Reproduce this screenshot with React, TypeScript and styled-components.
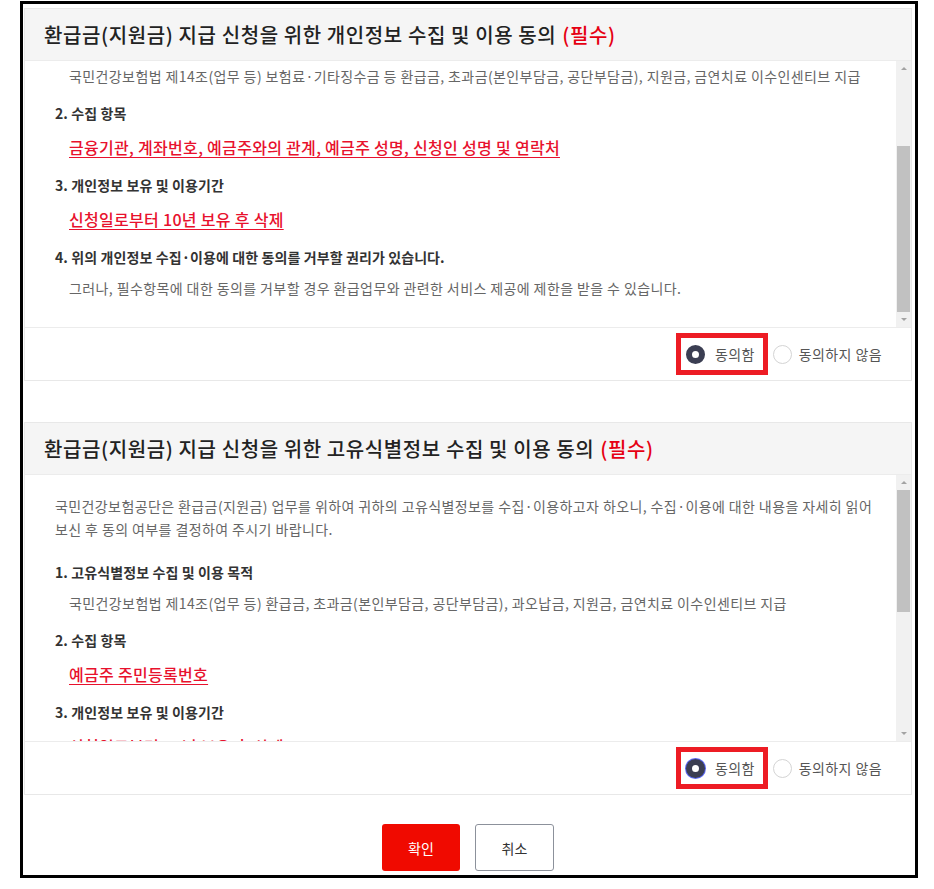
import React, { useLayoutEffect, useRef, useState } from 'react';
import styled, { createGlobalStyle, css } from 'styled-components';

interface TermItem {
  title: string;
  desc?: string;
  highlight?: string;
}

interface AgreePanelProps {
  title: string;
  intro: string;
  items: TermItem[];
  name: string;
  scrollToEnd?: boolean;
  focused?: boolean;
}

const privacyItems: TermItem[] = [
  {
    title: '1. 개인정보 수집 및 이용 목적',
    desc: '국민건강보험법 제14조(업무 등) 보험료·기타징수금 등 환급금, 초과금(본인부담금, 공단부담금), 지원금, 금연치료 이수인센티브 지급',
  },
  { title: '2. 수집 항목', highlight: '금융기관, 계좌번호, 예금주와의 관계, 예금주 성명, 신청인 성명 및 연락처' },
  { title: '3. 개인정보 보유 및 이용기간', highlight: '신청일로부터 10년 보유 후 삭제' },
  {
    title: '4. 위의 개인정보 수집·이용에 대한 동의를 거부할 권리가 있습니다.',
    desc: '그러나, 필수항목에 대한 동의를 거부할 경우 환급업무와 관련한 서비스 제공에 제한을 받을 수 있습니다.',
  },
];

const uniqueItems: TermItem[] = [
  {
    title: '1. 고유식별정보 수집 및 이용 목적',
    desc: '국민건강보험법 제14조(업무 등) 환급금, 초과금(본인부담금, 공단부담금), 과오납금, 지원금, 금연치료 이수인센티브 지급',
  },
  { title: '2. 수집 항목', highlight: '예금주 주민등록번호' },
  { title: '3. 개인정보 보유 및 이용기간', highlight: '신청일로부터 10년 보유 후 삭제' },
  {
    title: '4. 위의 고유식별정보 수집·이용에 대한 동의를 거부할 권리가 있습니다.',
    desc: '그러나, 필수항목에 대한 동의를 거부할 경우 환급업무와 관련한 서비스 제공에 제한을 받을 수 있습니다.',
  },
  {
    title: '5. 고유식별정보 처리 근거',
    desc: '국민건강보험법 시행령 제81조의4(민감정보 및 고유식별정보의 처리)',
  },
  {
    title: '6. 고유식별정보의 제3자 제공',
    desc: '수집된 고유식별정보는 법령에 근거한 경우를 제외하고 제3자에게 제공하지 않습니다.',
  },
];

function AgreePanel({ title, intro, items, name, scrollToEnd, focused }: AgreePanelProps) {
  const scrollRef = useRef<HTMLDivElement>(null);
  const [thumb, setThumb] = useState({ top: 0, height: 0 });

  const measure = () => {
    const el = scrollRef.current;
    if (!el) return;
    const rail = el.clientHeight - 30;
    setThumb({
      top: (rail * el.scrollTop) / el.scrollHeight,
      height: (rail * el.clientHeight) / el.scrollHeight,
    });
  };

  useLayoutEffect(() => {
    if (scrollToEnd && scrollRef.current) {
      scrollRef.current.scrollTop = scrollRef.current.scrollHeight;
    }
    measure();
  }, [scrollToEnd]);

  return (
    <Panel>
      <PanelHeader>
        {title} <Required>(필수)</Required>
      </PanelHeader>
      <ScrollArea>
        <TermsBox ref={scrollRef} onScroll={measure}>
          <Intro>{intro}</Intro>
          {items.map((item) => (
            <Term key={item.title}>
              <TermTitle>{item.title}</TermTitle>
              {item.desc && <TermDesc>{item.desc}</TermDesc>}
              {item.highlight && <TermHighlight>{item.highlight}</TermHighlight>}
            </Term>
          ))}
        </TermsBox>
        <ScrollTrack>
          <ScrollArrow $dir="up" />
          <ScrollRail>
            <ScrollThumb style={{ top: thumb.top, height: thumb.height }} />
          </ScrollRail>
          <ScrollArrow $dir="down" />
        </ScrollTrack>
      </ScrollArea>
      <RadioRow>
        <RadioOption $marked>
          <RadioInput type="radio" name={name} defaultChecked $focused={focused} />
          동의함
        </RadioOption>
        <RadioOption>
          <RadioInput type="radio" name={name} />
          동의하지 않음
        </RadioOption>
      </RadioRow>
    </Panel>
  );
}

export default function App() {
  return (
    <>
      <GlobalStyle />
      <Frame>
        <AgreePanel
          title="환급금(지원금) 지급 신청을 위한 개인정보 수집 및 이용 동의"
          intro="국민건강보험공단은 환급금(지원금) 업무를 위하여 귀하의 개인정보를 수집·이용하고자 하오니, 수집·이용에 대한 내용을 자세히 읽어 보신 후 동의 여부를 결정하여 주시기 바랍니다."
          items={privacyItems}
          name="agreePrivacy"
          scrollToEnd
        />
        <AgreePanel
          title="환급금(지원금) 지급 신청을 위한 고유식별정보 수집 및 이용 동의"
          intro="국민건강보험공단은 환급금(지원금) 업무를 위하여 귀하의 고유식별정보를 수집·이용하고자 하오니, 수집·이용에 대한 내용을 자세히 읽어 보신 후 동의 여부를 결정하여 주시기 바랍니다."
          items={uniqueItems}
          name="agreeUnique"
          focused
        />
        <ButtonRow>
          <ActionButton $primary>확인</ActionButton>
          <ActionButton>취소</ActionButton>
        </ButtonRow>
      </Frame>
    </>
  );
}

const GlobalStyle = createGlobalStyle`
  * {
    box-sizing: border-box;
  }

  body {
    margin: 0;
    background: #fff;
    font-family: 'Noto Sans CJK KR', 'Noto Sans', sans-serif;
    color: #333;
  }
`;

const Frame = styled.main`
  display: flex;
  flex-direction: column;
  gap: 41px;

  width: 898px;
  height: 877px;
  margin: 1px 0 0 20px;
  padding: 4px 3px 0 1px;

  border: 3px solid #000;
  background: #fff;
`;

const Panel = styled.section`
  display: flex;
  flex-direction: column;

  border: 1px solid #e8e8e8;
`;

const PanelHeader = styled.h2`
  display: flex;
  align-items: center;
  gap: 6px;

  height: 52px;
  margin: 0;
  padding: 0 19px;

  border-bottom: 1px solid #ececec;
  background: #f5f5f5;

  font-size: 20px;
  font-weight: 500;
  color: #222;
  letter-spacing: 0.6px;
`;

const Required = styled.span`
  color: #e60012;
`;

const ScrollArea = styled.div`
  display: flex;
  height: 266px;
`;

const TermsBox = styled.div`
  flex: 1;
  padding: 20px 20px 27px 30px;
  overflow-y: auto;
  scrollbar-width: none;
`;

const ScrollTrack = styled.div`
  display: flex;
  flex-direction: column;
  flex: none;

  width: 15px;
  background: #f1f1f1;
`;

const ScrollArrow = styled.div<{ $dir: 'up' | 'down' }>`
  display: flex;
  justify-content: center;
  align-items: center;

  height: 15px;

  &::after {
    content: '';
    border-left: 3px solid transparent;
    border-right: 3px solid transparent;
    ${({ $dir }) =>
      $dir === 'up'
        ? css`
            border-bottom: 3px solid #a3a3a3;
          `
        : css`
            border-top: 3px solid #a3a3a3;
          `}
  }
`;

const ScrollRail = styled.div`
  position: relative;
  flex: 1;
`;

const ScrollThumb = styled.div`
  position: absolute;
  left: 1px;
  right: 1px;

  background: #c1c1c1;
`;

const Intro = styled.p`
  margin: 0;

  font-size: 14px;
  line-height: 23px;
  color: #666;
  letter-spacing: 0.4px;
`;

const Term = styled.div`
  display: flex;
  flex-direction: column;

  margin-top: 14px;

  &:first-of-type {
    margin-top: 20px;
  }
`;

const TermTitle = styled.h3`
  margin: 0;

  font-size: 14px;
  font-weight: 700;
  line-height: 23px;
  color: #333;
  letter-spacing: 0.1px;
`;

const TermDesc = styled.p`
  margin: 8px 0 0;
  padding-left: 14px;

  font-size: 14px;
  line-height: 23px;
  color: #666;
  letter-spacing: 0.4px;
`;

const TermHighlight = styled.p`
  margin: 9px 0 0;
  padding-left: 14px;

  font-size: 16px;
  font-weight: 500;
  line-height: 26px;
  color: #e8112d;
  letter-spacing: 0.3px;
  text-decoration: underline;
  text-underline-offset: 3px;
`;

const RadioRow = styled.div`
  display: flex;
  justify-content: flex-end;
  align-items: center;
  gap: 5px;

  height: 53px;
  padding-right: 29px;

  border-top: 1px solid #ececec;
`;

const RadioOption = styled.label<{ $marked?: boolean }>`
  display: flex;
  align-items: center;
  gap: 7px;

  font-size: 14px;
  line-height: 20px;
  color: #555;
  letter-spacing: 0.4px;

  ${({ $marked }) =>
    $marked &&
    css`
      gap: 10px;
      padding: 6px 8px 6px 5px;
      border: 5px solid #ed1c24;
      background: #fff;
    `}
`;

const RadioInput = styled.input<{ $focused?: boolean }>`
  appearance: none;
  flex: none;

  width: 19px;
  height: 19px;
  margin: 0;

  border: 1px solid #d4d4d4;
  border-radius: 50%;
  background: #fff;

  &:checked {
    border: 6px solid #3b3e52;
  }

  ${({ $focused }) =>
    $focused &&
    css`
      box-shadow: 0 0 0 1px #5a67f2;
    `}
`;

const ButtonRow = styled.div`
  display: flex;
  justify-content: center;
  gap: 15px;

  margin-top: -12px;
`;

const ActionButton = styled.button<{ $primary?: boolean }>`
  width: 78px;
  height: 47px;

  border-radius: 3px;
  font-family: inherit;
  font-size: 14px;
  cursor: pointer;

  ${({ $primary }) =>
    $primary
      ? css`
          border: none;
          background: #f00a00;
          color: #fff;
        `
      : css`
          width: 79px;
          border: 1px solid #8c919b;
          background: #fff;
          color: #333;
        `}
`;
